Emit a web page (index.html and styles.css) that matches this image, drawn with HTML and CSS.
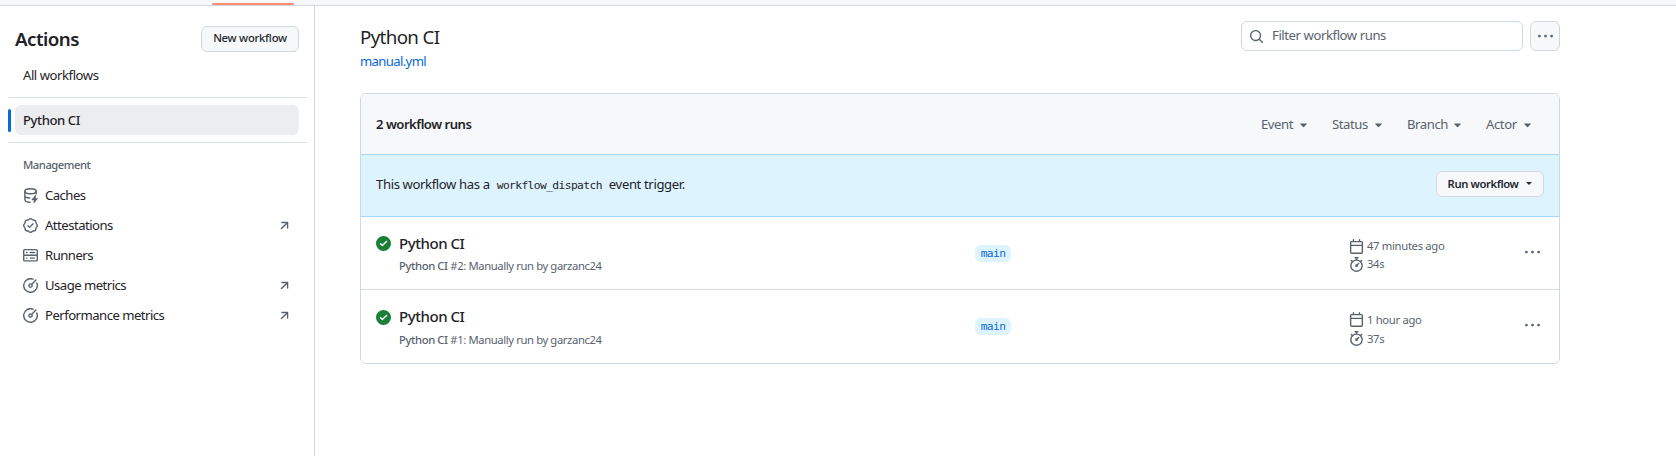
FILE: index.html
```html
<!DOCTYPE html>
<html lang="en">
<head>
<meta charset="utf-8">
<title>Workflow runs</title>
<link rel="stylesheet" href="styles.css">
</head>
<body>
<svg class="defs" aria-hidden="true">
  <symbol id="search" viewBox="0 0 16 16"><path d="M10.68 11.74a6 6 0 0 1-7.922-8.982 6 6 0 0 1 8.982 7.922l3.04 3.04a.749.749 0 0 1-.326 1.275.749.749 0 0 1-.734-.215ZM11.5 7a4.499 4.499 0 1 0-8.997 0A4.499 4.499 0 0 0 11.5 7Z"/></symbol>
  <symbol id="check" viewBox="0 0 16 16"><path d="M8 16A8 8 0 1 1 8 0a8 8 0 0 1 0 16Zm3.78-9.72a.751.751 0 0 0-.018-1.042.751.751 0 0 0-1.042-.018L6.75 9.19 5.28 7.72a.751.751 0 0 0-1.042.018.751.751 0 0 0-.018 1.042l2 2a.75.75 0 0 0 1.06 0Z"/></symbol>
  <symbol id="calendar" viewBox="0 0 16 16"><path d="M4.75 0a.75.75 0 0 1 .75.75V2h5V.75a.75.75 0 0 1 1.5 0V2h1.25c.966 0 1.75.784 1.75 1.75v10.5A1.75 1.75 0 0 1 13.25 16H2.75A1.75 1.75 0 0 1 1 14.25V3.75C1 2.784 1.784 2 2.75 2H4V.75A.75.75 0 0 1 4.75 0ZM2.5 7.5v6.75c0 .138.112.25.25.25h10.5a.25.25 0 0 0 .25-.25V7.5Zm10.75-4H2.75a.25.25 0 0 0-.25.25V6h11V3.75a.25.25 0 0 0-.25-.25Z"/></symbol>
  <symbol id="stopwatch" viewBox="0 0 16 16"><path d="M5.75.75A.75.75 0 0 1 6.5 0h3a.75.75 0 0 1 0 1.5h-.75v1l-.001.041a6.724 6.724 0 0 1 3.464 1.435l.007-.006.75-.75a.749.749 0 0 1 1.275.326.749.749 0 0 1-.215.734l-.75.75-.006.007a6.75 6.75 0 1 1-10.548 0L2.72 5.03l-.75-.75a.751.751 0 0 1 .018-1.042.751.751 0 0 1 1.042-.018l.75.75.007.006A6.72 6.72 0 0 1 7.25 2.541V1.5H6.5a.75.75 0 0 1-.75-.75ZM8 14.5a5.25 5.25 0 1 0-.001-10.501A5.25 5.25 0 0 0 8 14.5Zm.389-6.7 1.33-1.33a.75.75 0 1 1 1.061 1.06L9.45 8.861A1.503 1.503 0 0 1 8 10.75a1.499 1.499 0 1 1 .389-2.95Z"/></symbol>
  <symbol id="dots" viewBox="0 0 16 16"><circle cx="1.5" cy="7.5" r="1.5"/><circle cx="8" cy="7.5" r="1.5"/><circle cx="14.5" cy="7.5" r="1.5"/></symbol>
  <symbol id="caret" viewBox="0 0 16 16"><path d="m4.427 7.427 3.396 3.396a.25.25 0 0 0 .354 0l3.396-3.396A.25.25 0 0 0 11.396 7H4.604a.25.25 0 0 0-.177.427Z"/></symbol>
  <symbol id="out" viewBox="0 0 16 16"><path d="M4.53 4.75A.75.75 0 0 1 5.28 4h6.01a.75.75 0 0 1 .75.75v6.01a.75.75 0 0 1-1.5 0v-4.2l-5.26 5.261a.749.749 0 0 1-1.275-.326.749.749 0 0 1 .215-.734L9.48 5.5h-4.2a.75.75 0 0 1-.75-.75Z"/></symbol>
  <symbol id="server" viewBox="0 0 16 16"><path d="M1.75 1h12.5c.966 0 1.75.784 1.75 1.75v4c0 .372-.116.717-.314 1 .198.283.314.628.314 1v4a1.75 1.75 0 0 1-1.75 1.75H1.75A1.75 1.75 0 0 1 0 12.75v-4c0-.358.109-.707.314-1a1.739 1.739 0 0 1-.314-1v-4C0 1.784.784 1 1.75 1ZM1.5 2.75v4c0 .138.112.25.25.25h12.5a.25.25 0 0 0 .25-.25v-4a.25.25 0 0 0-.25-.25H1.75a.25.25 0 0 0-.25.25Zm.25 5.75a.25.25 0 0 0-.25.25v4c0 .138.112.25.25.25h12.5a.25.25 0 0 0 .25-.25v-4a.25.25 0 0 0-.25-.25ZM7 4.75A.75.75 0 0 1 7.75 4h4.5a.75.75 0 0 1 0 1.5h-4.5A.75.75 0 0 1 7 4.75ZM7.75 10h4.5a.75.75 0 0 1 0 1.5h-4.5a.75.75 0 0 1 0-1.5ZM3 4.75A.75.75 0 0 1 3.75 4h.5a.75.75 0 0 1 0 1.5h-.5A.75.75 0 0 1 3 4.75ZM3.75 10h.5a.75.75 0 0 1 0 1.5h-.5a.75.75 0 0 1 0-1.5Z"/></symbol>
  <symbol id="verified" viewBox="0 0 16 16"><path d="m9.585.52.929.68c.153.112.331.186.518.215l1.138.175a2.678 2.678 0 0 1 2.24 2.24l.174 1.139c.029.187.103.365.215.518l.68.928a2.677 2.677 0 0 1 0 3.17l-.68.928a1.174 1.174 0 0 0-.215.518l-.175 1.138a2.678 2.678 0 0 1-2.241 2.241l-1.138.175a1.17 1.17 0 0 0-.518.215l-.928.68a2.677 2.677 0 0 1-3.17 0l-.928-.68a1.174 1.174 0 0 0-.518-.215L3.83 14.41a2.678 2.678 0 0 1-2.24-2.24l-.175-1.138a1.17 1.17 0 0 0-.215-.518l-.68-.928a2.677 2.677 0 0 1 0-3.17l.68-.928c.112-.153.186-.331.215-.518l.175-1.14a2.678 2.678 0 0 1 2.24-2.24l1.139-.175c.187-.029.365-.103.518-.215l.928-.68a2.677 2.677 0 0 1 3.17 0ZM7.303 1.728l-.927.68a2.67 2.67 0 0 1-1.18.489l-1.137.174a1.179 1.179 0 0 0-.987.987l-.174 1.136a2.677 2.677 0 0 1-.489 1.18l-.68.928a1.18 1.18 0 0 0 0 1.394l.68.927c.256.348.424.753.489 1.18l.174 1.137c.078.509.478.909.987.987l1.136.174a2.67 2.67 0 0 1 1.18.489l.928.68c.414.305.979.305 1.394 0l.927-.68a2.67 2.67 0 0 1 1.18-.489l1.137-.174a1.18 1.18 0 0 0 .987-.987l.174-1.136a2.67 2.67 0 0 1 .489-1.18l.68-.928a1.176 1.176 0 0 0 0-1.394l-.68-.927a2.686 2.686 0 0 1-.489-1.18l-.174-1.137a1.179 1.179 0 0 0-.987-.987l-1.136-.174a2.677 2.677 0 0 1-1.18-.489l-.928-.68a1.176 1.176 0 0 0-1.394 0ZM11.28 6.78l-3.75 3.75a.75.75 0 0 1-1.06 0L4.72 8.78a.751.751 0 0 1 .018-1.042.751.751 0 0 1 1.042-.018L7 8.94l3.22-3.22a.751.751 0 0 1 1.042.018.751.751 0 0 1 .018 1.042Z"/></symbol>
  <symbol id="meter" viewBox="0 0 16 16"><path d="M8 1.5a6.5 6.5 0 1 0 6.016 4.035.75.75 0 0 1 1.388-.57 8 8 0 1 1-4.37-4.37.75.75 0 0 1-.569 1.389A6.473 6.473 0 0 0 8 1.5Zm6.28.22a.75.75 0 0 1 0 1.06l-4.063 4.064a2.5 2.5 0 1 1-1.06-1.06L13.22 1.72a.75.75 0 0 1 1.06 0ZM7 8a1 1 0 1 0 2 0 1 1 0 0 0-2 0Z"/></symbol>
  <symbol id="cache" viewBox="0 0 16 16"><g fill="none" stroke="currentColor" stroke-width="1.5" stroke-linecap="round"><ellipse cx="8" cy="3.5" rx="6" ry="2.7"/><path d="M2 3.5v9c0 1.4 2.4 2.6 5.6 2.7M14 3.5v2.8M2 8c0 1.4 2.4 2.5 5.2 2.7"/></g><path d="M13.2 7.6 9.2 12.3c-.2.3 0 .7.3.7h2.2l-.6 2.7c-.1.5.5.7.8.4l3.9-4.6c.2-.3 0-.7-.3-.7h-2.1l.6-2.9c.1-.5-.5-.7-.8-.3Z"/></symbol>
</svg>

<header class="topbar"><div class="tab"></div></header>

<div class="layout">
  <nav class="sidebar">
    <div class="side-head"><h2 class="side-title">Actions</h2><button class="btn new-btn">New workflow</button></div>
    <a class="item all"><span>All workflows</span></a>
    <div class="rule"></div>
    <div class="current"><a class="item selected"><span>Python CI</span></a></div>
    <div class="rule"></div>
    <h3 class="group">Management</h3>
    <a class="item"><svg class="icon"><use href="#cache"/></svg><span>Caches</span></a>
    <a class="item"><svg class="icon"><use href="#verified"/></svg><span>Attestations</span><svg class="icon end"><use href="#out"/></svg></a>
    <a class="item"><svg class="icon"><use href="#server"/></svg><span>Runners</span></a>
    <a class="item"><svg class="icon"><use href="#meter"/></svg><span>Usage metrics</span><svg class="icon end"><use href="#out"/></svg></a>
    <a class="item"><svg class="icon"><use href="#meter"/></svg><span>Performance metrics</span><svg class="icon end"><use href="#out"/></svg></a>
  </nav>

  <main class="main">
    <div class="page-head">
      <div class="titles"><h1 class="title">Python CI</h1><a class="file">manual.yml</a></div>
      <div class="search"><svg class="icon"><use href="#search"/></svg><span class="placeholder">Filter workflow runs</span></div>
      <button class="btn more"><svg class="icon"><use href="#dots"/></svg></button>
    </div>

    <section class="box">
      <div class="box-head">
        <strong class="count">2 workflow runs</strong>
        <div class="filters">
          <span class="filter event">Event<svg class="icon"><use href="#caret"/></svg></span>
          <span class="filter status">Status<svg class="icon"><use href="#caret"/></svg></span>
          <span class="filter branch">Branch<svg class="icon"><use href="#caret"/></svg></span>
          <span class="filter actor">Actor<svg class="icon"><use href="#caret"/></svg></span>
        </div>
      </div>
      <div class="dispatch">
        <span class="notice">This workflow has a <code>workflow_dispatch</code> event trigger.</span>
        <button class="btn run-btn">Run workflow<i class="small-caret"></i></button>
      </div>
      <article class="run">
        <svg class="icon ok"><use href="#check"/></svg>
        <div class="info"><a class="name">Python CI</a><div class="desc"><b>Python CI</b> #2: Manually run by garzanc24</div></div>
        <div class="ref"><span class="label">main</span></div>
        <div class="meta"><div class="stat"><svg class="icon"><use href="#calendar"/></svg><span>47 minutes ago</span></div><div class="stat"><svg class="icon"><use href="#stopwatch"/></svg><span>34s</span></div></div>
        <svg class="icon menu"><use href="#dots"/></svg>
      </article>
      <article class="run second">
        <svg class="icon ok"><use href="#check"/></svg>
        <div class="info"><a class="name">Python CI</a><div class="desc"><b>Python CI</b> #1: Manually run by garzanc24</div></div>
        <div class="ref"><span class="label">main</span></div>
        <div class="meta"><div class="stat"><svg class="icon"><use href="#calendar"/></svg><span>1 hour ago</span></div><div class="stat"><svg class="icon"><use href="#stopwatch"/></svg><span>37s</span></div></div>
        <svg class="icon menu"><use href="#dots"/></svg>
      </article>
    </section>
  </main>
</div>
</body>
</html>
```
FILE: styles.css
```css
* { box-sizing: border-box; }
body { margin: 0; height: 456px; overflow: hidden; display: flex; flex-direction: column; background: #fff; color: #1f2328; font: 13.125px/20px "Noto Sans", sans-serif; letter-spacing: -.42px; }
h1, h2, h3 { margin: 0; }
.defs { display: none; }
.icon { width: 15px; height: 15px; fill: currentColor; color: #59636e; flex: none; display: block; }
.topbar { height: 6px; flex: none; background: #f6f8fa; border-bottom: 1px solid #d1d9e0; padding: 3px 0 0 212px; }
.tab { width: 82px; height: 2px; background: #fd8c73; border-radius: 1px; }
.layout { flex: 1; display: flex; }
.sidebar { width: 315px; flex: none; border-right: 1px solid #d1d9e0; padding: 0 7px 0 8px; }
.side-head { display: flex; justify-content: space-between; padding: 20px 8px 0 7px; height: 54px; }
.side-title { font-size: 18.75px; line-height: 28px; font-weight: 600; margin-top: -1px; letter-spacing: -.53px; }
.btn { display: flex; align-items: center; justify-content: center; font: 500 11.25px/18px "Noto Sans", sans-serif; color: #25292e; background: #f6f8fa; border: 1px solid #d1d9e0; border-radius: 6px; padding: 0; letter-spacing: -.25px; }
.new-btn { width: 98px; height: 26px; padding-bottom: 2px; }
.item { display: flex; align-items: center; gap: 7px; height: 30px; margin: 0 8px 0 7px; padding: 0 8px; border-radius: 6px; letter-spacing: -.52px; }
.end { margin-left: auto; margin-right: -1px; }
.all { margin-bottom: 7px; letter-spacing: -.45px; }
.rule { height: 1px; background: #dae0e7; }
.current { position: relative; padding: 7px 0; }
.current::before { content: ""; position: absolute; left: 0; top: 11px; width: 3px; height: 23px; border-radius: 3px; background: #0969da; }
.selected { background: #ecedef; font-weight: 500; letter-spacing: -.42px; }
.group { margin: 13px 0 6px 15px; font-size: 11.25px; line-height: 18px; font-weight: 500; color: #59636e; letter-spacing: -.48px; }
.main { flex: 1; padding: 15px 116px 0 45px; }
.page-head { display: flex; height: 72px; }
.titles { flex: 1; padding-top: 2px; }
.title { font-size: 18.75px; line-height: 28px; font-weight: 400; letter-spacing: -.65px; }
.file { display: block; color: #0969da; letter-spacing: -.64px; }
.search { width: 282px; height: 30px; border: 1px solid #d1d9e0; border-radius: 6px; display: flex; align-items: center; gap: 8px; padding-left: 7px; color: #59636e; margin-right: 7px; }
.placeholder { padding-bottom: 2px; }
.more { width: 30px; height: 30px; }
.box { border: 1px solid #d1d9e0; border-radius: 6px; overflow: hidden; height: 271px; }
.box-head { height: 60px; background: #f6f8fa; display: flex; align-items: center; justify-content: space-between; padding: 0 24px 0 15px; }
.count { font-weight: 600; letter-spacing: -.5px; }
.filters { display: flex; gap: 21px; color: #59636e; }
.filter { display: flex; align-items: center; justify-content: space-between; }
.event { width: 50px; }
.status { width: 54px; }
.branch { width: 58px; }
.actor { width: 49px; }
.dispatch { height: 63px; background: #ddf4ff; border-top: 1px solid #a6d8ff; border-bottom: 1px solid #a6d8ff; display: flex; align-items: center; justify-content: space-between; padding: 0 15px 3px; }
.notice { letter-spacing: -.38px; }
.notice code { font: 11.25px/18px "DejaVu Sans Mono", monospace; letter-spacing: -.59px; padding: 0 4px; }
.run-btn { width: 108px; height: 26px; gap: 8px; padding-bottom: 1px; font-weight: 600; letter-spacing: -.4px; }
.small-caret { border: 3px solid transparent; border-top-color: #25292e; border-bottom: 0; }
.run { height: 73px; display: flex; padding: 0 19px 0 15px; border-bottom: 1px solid #d8dee4; }
.second { height: 74px; border-bottom: 0; }
.ok { color: #1a7f37; margin: 19px 8px 0 0; }
.second .ok { margin-top: 20px; }
.info { width: 576px; padding-top: 15px; }
.name { display: block; font-size: 15px; line-height: 22px; font-weight: 500; letter-spacing: -.45px; }
.desc { font-size: 11.25px; line-height: 18px; color: #59636e; margin-top: 3px; letter-spacing: -.38px; }
.desc b { font-weight: 500; }
.second .desc { margin-top: 4px; }
.ref { width: 374px; padding-top: 28px; }
.label { display: block; width: 36px; height: 17px; text-align: center; border-radius: 6px; background: #ddf4ff; color: #0969da; font: 11.25px/17px "DejaVu Sans Mono", monospace; letter-spacing: -.59px; }
.meta { flex: 1; padding-top: 20px; font-size: 11.25px; line-height: 18px; color: #59636e; letter-spacing: -.32px; }
.stat { display: flex; align-items: center; gap: 3px; height: 18px; }
.second .stat { height: 19px; }
.menu { margin-top: 28px; }
```
